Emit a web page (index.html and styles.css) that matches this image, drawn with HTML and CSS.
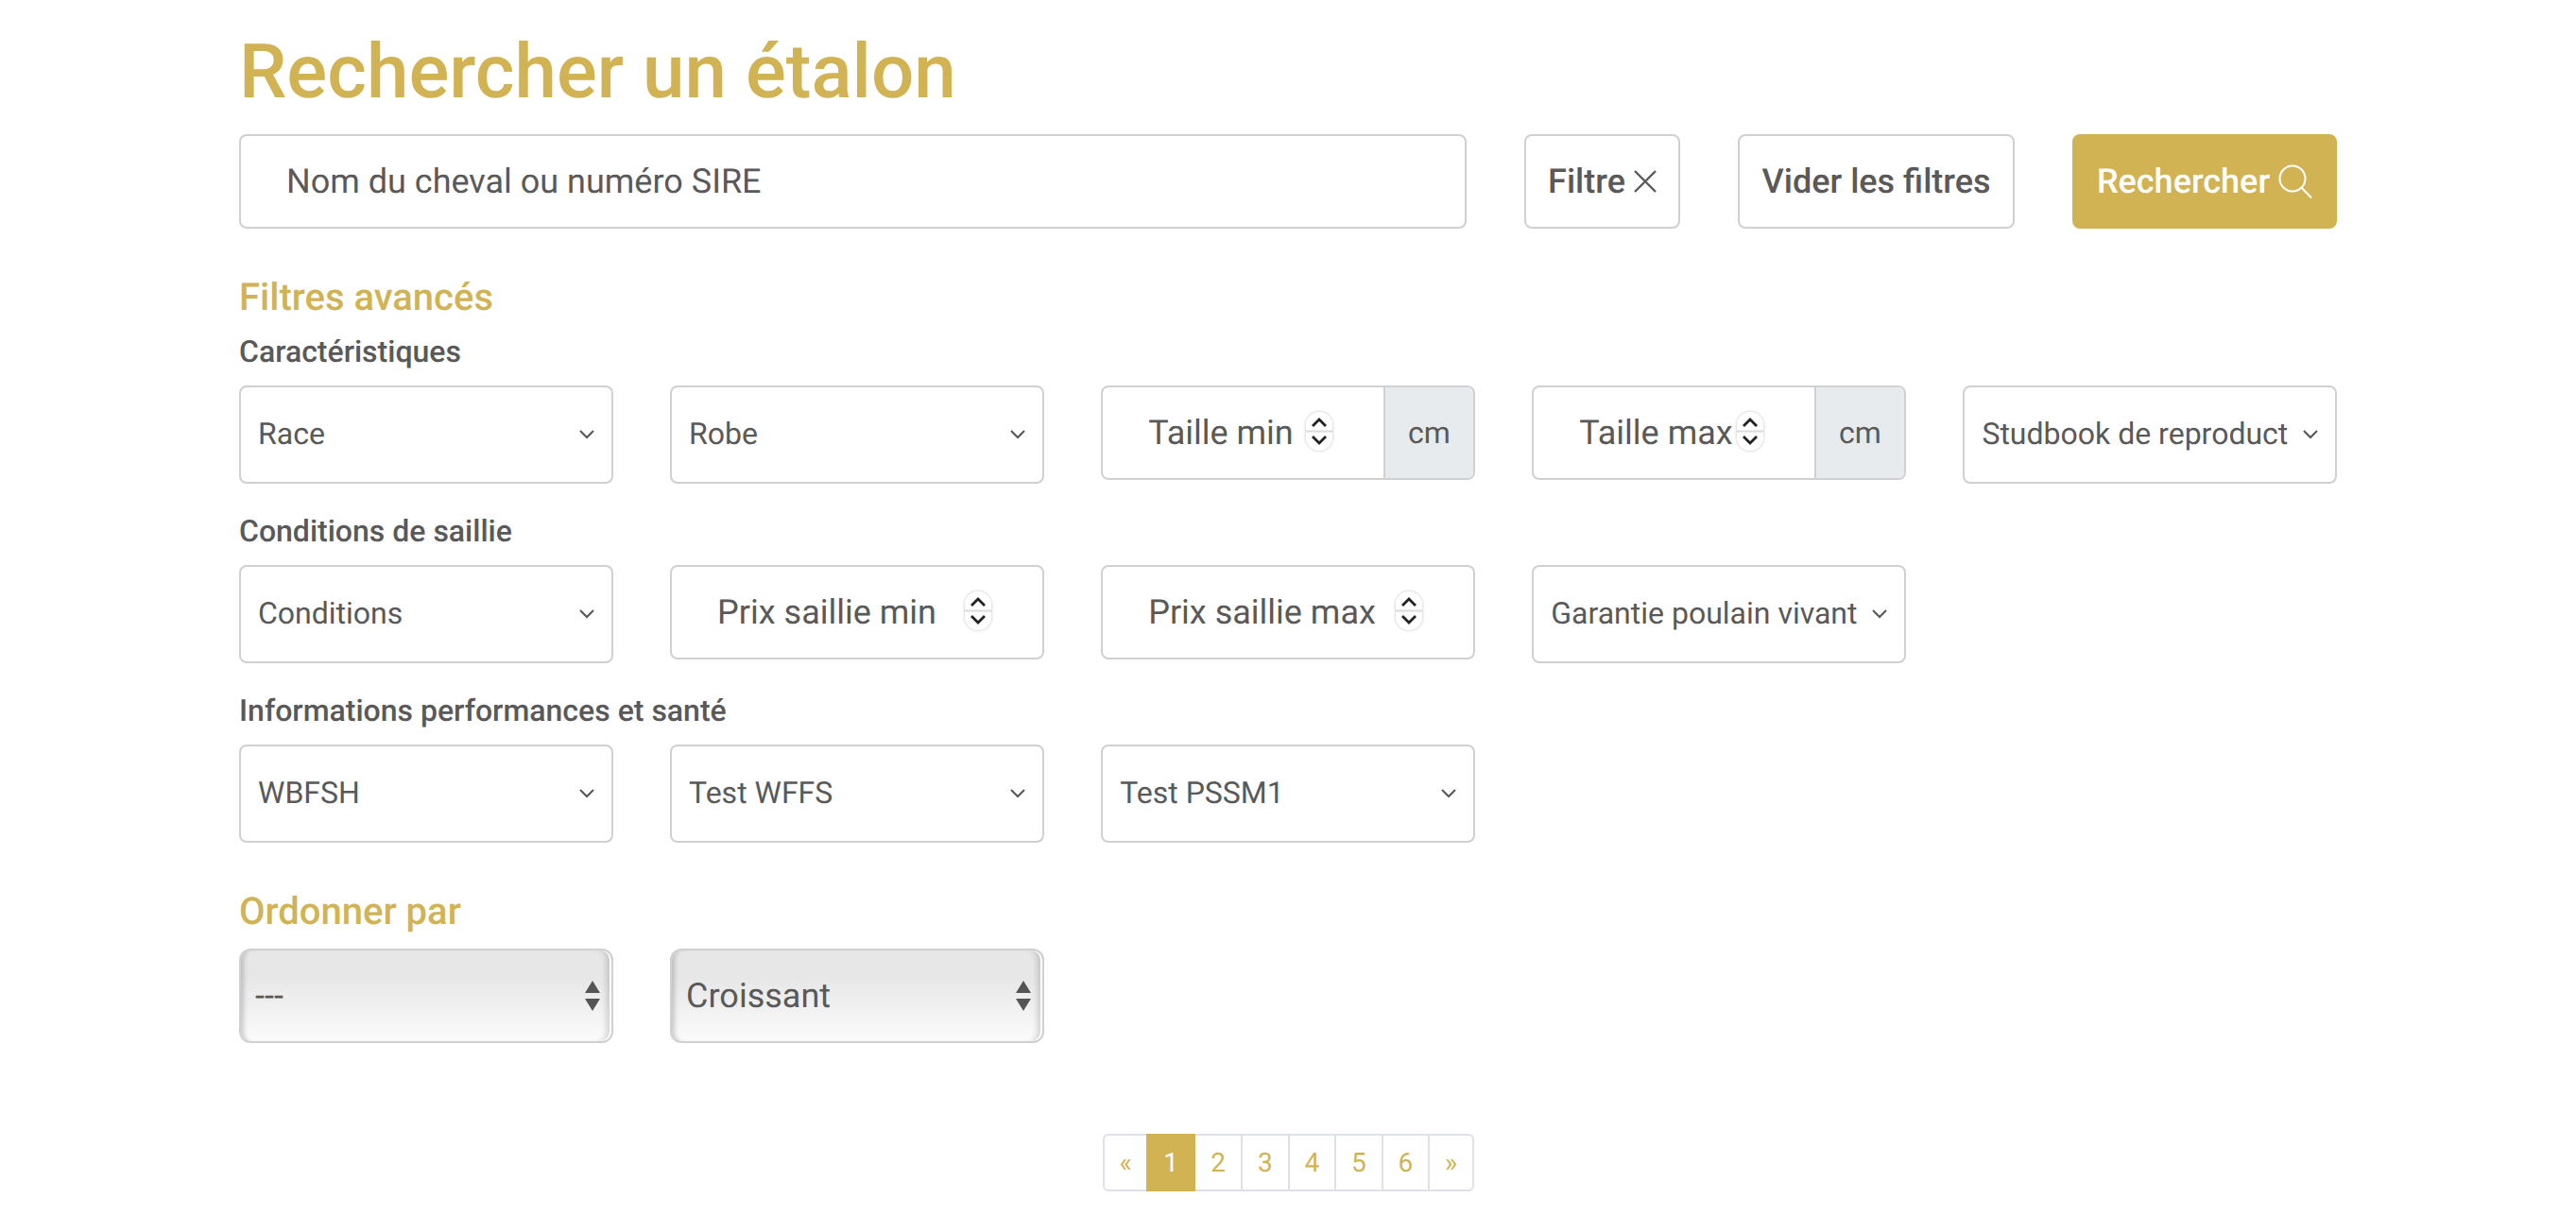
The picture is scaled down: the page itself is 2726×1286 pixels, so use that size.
FILE: index.html
```html
<!DOCTYPE html>
<html lang="fr">
<head>
<meta charset="utf-8">
<title>Rechercher un étalon</title>
<link rel="stylesheet" href="styles.css">
</head>
<body>
<main class="page">
  <h1 class="title">Rechercher un étalon</h1>
  <form class="search-row">
    <input class="field search-input" type="text" placeholder="Nom du cheval ou numéro SIRE">
    <button class="btn btn-filter" type="button">Filtre
      <svg class="btn-icon" width="24" height="24" viewBox="0 0 24 24" aria-hidden="true"><path d="M1 1 L23 23 M23 1 L1 23" fill="none" stroke="currentColor" stroke-width="2.4"/></svg>
    </button>
    <button class="btn btn-clear" type="button">Vider les filtres</button>
    <button class="btn btn-primary" type="button">Rechercher
      <svg class="btn-icon" width="36" height="36" viewBox="0 0 36 36" aria-hidden="true"><circle cx="15" cy="15" r="13.5" fill="none" stroke="currentColor" stroke-width="2"/><path d="M24.5 24.5 L35 35.5" fill="none" stroke="currentColor" stroke-width="2"/></svg>
    </button>
  </form>

  <h2 class="section-title section-advanced">Filtres avancés</h2>

  <h3 class="group-label">Caractéristiques</h3>
  <div class="filters">
    <select class="select"><option>Race</option></select>
    <select class="select"><option>Robe</option></select>
    <div class="input-group">
      <div class="number-wrap">
        <input class="number-input" type="text" placeholder="Taille min">
        <span class="spinner"><svg width="28" height="41" viewBox="0 0 28 41" aria-hidden="true"><path d="M7 15 L14 8 L21 15 M7 26 L14 33 L21 26" fill="none" stroke="#222" stroke-width="2.8"/></svg></span>
      </div>
      <span class="addon">cm</span>
    </div>
    <div class="input-group">
      <div class="number-wrap">
        <input class="number-input" type="text" placeholder="Taille max">
        <span class="spinner"><svg width="28" height="41" viewBox="0 0 28 41" aria-hidden="true"><path d="M7 15 L14 8 L21 15 M7 26 L14 33 L21 26" fill="none" stroke="#222" stroke-width="2.8"/></svg></span>
      </div>
      <span class="addon">cm</span>
    </div>
    <select class="select"><option>Studbook de reproduction</option></select>
  </div>

  <h3 class="group-label">Conditions de saillie</h3>
  <div class="filters">
    <select class="select"><option>Conditions</option></select>
    <div class="input-group">
      <div class="number-wrap">
        <input class="number-input" type="text" placeholder="Prix saillie min">
        <span class="spinner"><svg width="28" height="41" viewBox="0 0 28 41" aria-hidden="true"><path d="M7 15 L14 8 L21 15 M7 26 L14 33 L21 26" fill="none" stroke="#222" stroke-width="2.8"/></svg></span>
      </div>
    </div>
    <div class="input-group">
      <div class="number-wrap">
        <input class="number-input" type="text" placeholder="Prix saillie max">
        <span class="spinner"><svg width="28" height="41" viewBox="0 0 28 41" aria-hidden="true"><path d="M7 15 L14 8 L21 15 M7 26 L14 33 L21 26" fill="none" stroke="#222" stroke-width="2.8"/></svg></span>
      </div>
    </div>
    <select class="select"><option>Garantie poulain vivant</option></select>
  </div>

  <h3 class="group-label">Informations performances et santé</h3>
  <div class="filters">
    <select class="select"><option>WBFSH</option></select>
    <select class="select"><option>Test WFFS</option></select>
    <select class="select"><option>Test PSSM1</option></select>
  </div>

  <h2 class="section-title section-order">Ordonner par</h2>
  <div class="filters">
    <select class="native-select"><option>---</option></select>
    <select class="native-select"><option>Croissant</option></select>
  </div>

  <nav class="pagination" aria-label="Pagination">
    <a class="page-link page-edge" href="#">«</a>
    <a class="page-link page-current" href="#">1</a>
    <a class="page-link" href="#">2</a>
    <a class="page-link" href="#">3</a>
    <a class="page-link" href="#">4</a>
    <a class="page-link" href="#">5</a>
    <a class="page-link" href="#">6</a>
    <a class="page-link page-edge" href="#">»</a>
  </nav>
</main>
</body>
</html>
```

FILE: styles.css
```css
* { box-sizing: border-box; }

html, body { margin: 0; background: #fff; }

body {
  font-family: Roboto, "Liberation Sans", sans-serif;
  color: #595959;
  height: 1286px;
  overflow: hidden;
  text-rendering: geometricPrecision;
}

.page {
  width: 2220px;
  margin: 0 auto;
  padding-top: 28px;
}

.title {
  margin: 0 0 18px;
  font-size: 80px;
  line-height: 96px;
  font-weight: 500;
  color: #d1b354;
}

.search-row {
  display: flex;
  gap: 61px;
  height: 100px;
}

.field,
.btn,
.select,
.input-group,
.native-select {
  border: 2px solid #d0d0d0;
  border-radius: 8px;
}

.search-input {
  flex: 1;
  min-width: 0;
  padding: 0 48px;
  font: 400 36px Roboto, sans-serif;
  color: #595959;
  outline: none;
  text-rendering: geometricPrecision;
}

.search-input::placeholder,
.number-input::placeholder { color: #595959; opacity: 1; }

.btn {
  display: flex;
  align-items: center;
  justify-content: center;
  gap: 9px;
  padding: 0;
  background: #fff;
  color: #595959;
  font: 500 36px Roboto, sans-serif;
  white-space: nowrap;
  text-rendering: geometricPrecision;
}

.btn-filter { width: 165px; }
.btn-clear { width: 293px; }

.btn-primary {
  width: 280px;
  gap: 9px;
  background: #d1b354;
  border-color: #d1b354;
  color: #fff;
}

.section-title {
  margin: 0;
  font-size: 40px;
  line-height: 48px;
  font-weight: 500;
  color: #d1b354;
}

.section-advanced { margin-top: 49px; }
.section-order { margin-top: 49px; }

.group-label {
  margin: 0 0 17px;
  font-size: 32px;
  line-height: 38px;
  font-weight: 500;
  color: #595959;
}

.section-advanced + .group-label { margin-top: 14px; }

.filters + .group-label { margin-top: 31px; }

.filters {
  display: grid;
  grid-template-columns: repeat(5, 395.6px);
  column-gap: 60.5px;
  align-items: start;
}

.section-order + .filters { margin-top: 15px; }

.select {
  appearance: none;
  width: 100%;
  height: 104px;
  padding: 0 48px 2px 18px;
  background: #fff url("data:image/svg+xml,%3Csvg xmlns='http://www.w3.org/2000/svg' width='16' height='10' viewBox='0 0 16 10'%3E%3Cpath d='M1 1 L8 8 L15 1' fill='none' stroke='%23555' stroke-width='2'/%3E%3C/svg%3E") no-repeat right 18px center;
  color: #595959;
  font: 400 32px Roboto, sans-serif;
  outline: none;
  text-rendering: geometricPrecision;
}

.input-group {
  display: flex;
  height: 100px;
  overflow: hidden;
  background: #fff;
}

.number-wrap {
  position: relative;
  flex: 1;
  min-width: 0;
}

.number-input {
  width: 100%;
  height: 100%;
  padding: 0 0 0 48px;
  border: 0;
  background: transparent;
  font: 400 36px Roboto, sans-serif;
  color: #595959;
  outline: none;
  text-rendering: geometricPrecision;
}

.spinner {
  position: absolute;
  top: 26px;
  right: 54px;
  width: 28px;
  height: 41px;
  border-radius: 14px;
  background: linear-gradient(#fff 47%, #dcdcdc 48%, #dcdcdc 52%, #fff 53%);
  box-shadow: 0 0 3px rgba(0, 0, 0, .3);
}

.spinner svg { display: block; }

.addon {
  display: flex;
  align-items: center;
  justify-content: center;
  width: 95px;
  border-left: 2px solid #d0d0d0;
  background: #e8ebee;
  font-size: 32px;
  color: #595959;
}

.native-select {
  appearance: none;
  width: 100%;
  height: 100px;
  padding: 0 40px 0 15px;
  border-radius: 12px;
  background:
    url("data:image/svg+xml,%3Csvg xmlns='http://www.w3.org/2000/svg' width='16' height='32' viewBox='0 0 16 32'%3E%3Cpath d='M8 0 L16 13 H0 Z M0 19 H16 L8 32 Z' fill='%23555'/%3E%3C/svg%3E") no-repeat right 12px center,
    linear-gradient(#e7e7e7, #e7e7e7 30%, #fbfbfb 100%);
  box-shadow: inset -2px 0 0 #fff, inset -9px 0 6px -4px rgba(0, 0, 0, .16), inset 7px 0 5px -4px rgba(0, 0, 0, .18);
  color: #595959;
  font: 400 36px Roboto, sans-serif;
  outline: none;
  text-rendering: geometricPrecision;
}

.pagination {
  display: flex;
  width: 393px;
  height: 61px;
  margin: 96px 0 0 914px;
  border: 2px solid #dee2e6;
  border-radius: 6px;
}

.page-link {
  display: flex;
  flex: 1;
  align-items: center;
  justify-content: center;
  border-left: 2px solid #dee2e6;
  color: #d1b354;
  font-size: 28px;
  text-decoration: none;
}

.page-edge:first-child { border-left: 0; flex: 0 0 44px; }
.page-edge:last-child { flex: 0 0 47px; }

.page-current {
  flex: 0 0 52px;
  margin: -2px 0;
  border-left: 0;
  background: #d1b354;
  color: #fff;
}

.page-current + .page-link { border-left: 0; flex: 0 0 48px; }
```
